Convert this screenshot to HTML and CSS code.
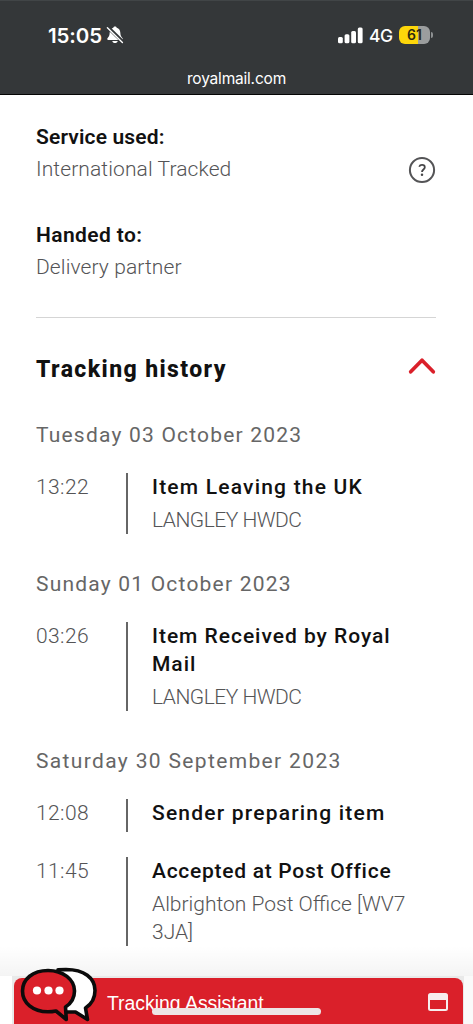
FILE: index.html
```html
<!DOCTYPE html>
<html lang="en">
<head>
<meta charset="utf-8">
<meta name="viewport" content="width=device-width, initial-scale=1">
<title>Royal Mail tracking</title>
<link rel="stylesheet" href="styles.css">
</head>
<body>
<div class="screen">
  <header class="browser-bar">
    <div class="status">
      <span class="clock">15:05</span>
      <svg class="bell" width="18" height="18" viewBox="0 0 18 18">
        <path d="M9 .5c.9 0 1.5.5 1.7 1.2 2.3.7 3.5 2.5 3.6 4.9.1 3 .9 4.200 2.200 5.600.6.7.2 1.700-.7 1.700H2.200c-.9 0-1.300-1-.7-1.700C2.900 10.800 3.600 9.600 3.700 6.600 3.800 4.200 5 2.400 7.300 1.700 7.500 1 8.100.5 9 .5z" fill="#fff"/>
        <path d="M6.300 14.900h5.400c-.3 1.300-1.300 2.100-2.700 2.100s-2.400-.8-2.700-2.100z" fill="#fff"/>
        <path d="M2.200 1.600 17 16" stroke="#343739" stroke-width="3.600"/>
        <path d="M1.400 1.800 16.400 16.400" stroke="#fff" stroke-width="1.400" stroke-linecap="round"/>
      </svg>
      <svg class="signal" width="25" height="17" viewBox="0 0 25 17" fill="#fff">
        <rect x="0" y="10" width="4.800" height="6.200" rx="1.500"/>
        <rect x="6.600" y="7.200" width="4.800" height="9" rx="1.500"/>
        <rect x="13.200" y="4" width="4.800" height="12.200" rx="1.500"/>
        <rect x="19.800" y=".6" width="4.800" height="15.600" rx="1.500"/>
      </svg>
      <span class="network">4G</span>
      <span class="battery"><span class="battery-level">61</span></span>
      <span class="battery-cap"></span>
    </div>
    <div class="address">royalmail.com</div>
  </header>

  <main class="content">
    <section class="detail">
      <div>
        <h2 class="label">Service used:</h2>
        <p class="value">International Tracked</p>
      </div>
      <svg class="help" width="28" height="28" viewBox="0 0 28 28" fill="none">
        <circle cx="14" cy="14" r="12.100" stroke="#545456" stroke-width="2"/>
        <path d="M11.200 10.700c.5-1.300 1.600-1.800 2.800-1.800 1.600 0 2.800.9 2.800 2.300 0 2.200-2.800 2.400-2.800 4.800" stroke="#454547" stroke-width="1.800"/>
        <circle cx="14" cy="18.700" r="1.250" fill="#454547"/>
      </svg>
    </section>
    <section class="detail">
      <div>
        <h2 class="label">Handed to:</h2>
        <p class="value">Delivery partner</p>
      </div>
    </section>

    <section class="history">
      <div class="history-head">
        <h1 class="heading">Tracking history</h1>
        <svg class="chevron" width="28" height="18" viewBox="0 0 28 18"><path d="M2.700 14.800 14 3.200 25.300 14.800" fill="none" stroke="#da202a" stroke-width="3.700" stroke-linecap="round" stroke-linejoin="round"/></svg>
      </div>

      <h3 class="date">Tuesday 03 October 2023</h3>
      <article class="event">
        <time class="time">13:22</time>
        <div class="event-body">
          <h4 class="event-title">Item Leaving the UK</h4>
          <p class="place">LANGLEY HWDC</p>
        </div>
      </article>

      <h3 class="date">Sunday 01 October 2023</h3>
      <article class="event">
        <time class="time">03:26</time>
        <div class="event-body">
          <h4 class="event-title snug">Item Received by Royal<br>Mail</h4>
          <p class="place">LANGLEY HWDC</p>
        </div>
      </article>

      <h3 class="date wide">Saturday 30 September 2023</h3>
      <article class="event">
        <time class="time">12:08</time>
        <div class="event-body">
          <h4 class="event-title">Sender preparing item</h4>
        </div>
      </article>
      <article class="event">
        <time class="time">11:45</time>
        <div class="event-body">
          <h4 class="event-title tight">Accepted at Post Office</h4>
          <p class="place address-line">Albrighton Post Office [WV7<br>3JA]</p>
        </div>
      </article>
    </section>
  </main>

  <aside class="assistant">
    <div class="assistant-bar">
      <span class="assistant-label">Tracking Assistant</span>
      <svg class="window" width="20" height="18" viewBox="0 0 20 18">
        <rect x="1" y="1" width="18" height="16" rx="1.500" fill="none" stroke="#f7eded" stroke-width="2"/>
        <path d="M1 1h18v6H1z" fill="#f7eded"/>
      </svg>
    </div>
    <svg class="chat" width="78" height="56" viewBox="0 0 78 56" stroke="#0b0b0b" stroke-width="3.600" stroke-linejoin="round">
      <path d="M46 3.500C64 3.500 75 12 75 24.500c0 8-4 14-9.500 17.500l2 11.500L55.500 46H38V3.800z" fill="#fff"/>
      <path d="M28 4.500C43 4.500 54.500 13.500 54.500 25c0 7-3.500 12.500-9 16l.8 12.500L36 45c-3 .6-5 .8-8 .8C13 45.800 2.500 37 2.500 25S13 4.500 28 4.500z" fill="#da202a"/>
      <g fill="#fff" stroke="none"><circle cx="17" cy="24.500" r="4.100"/><circle cx="28.500" cy="24.500" r="4.100"/><circle cx="39.500" cy="24.500" r="4.100"/></g>
    </svg>
    <span class="home-indicator"></span>
  </aside>
</div>
</body>
</html>
```
FILE: styles.css
```css
* { box-sizing: border-box; margin: 0; padding: 0; }

body { background: #fff; }

.screen {
  position: relative;
  width: 473px;
  height: 1024px;
  overflow: hidden;
  background: #fff;
  font-family: Roboto, "Liberation Sans", sans-serif;
  font-size: 21px;
  color: #545456;
}

.browser-bar {
  height: 95px;
  background: #343739;
  border-top: 1px solid #414547;
  border-bottom: 1px solid #050505;
  font-family: Inter, sans-serif;
  color: #fff;
}

.status {
  display: flex;
  align-items: center;
  height: 36px;
  margin-top: 16px;
  padding-left: 48px;
}

.clock { width: 54px; font-size: 20.500px; font-weight: 600; letter-spacing: -0.1px; white-space: nowrap; }
.bell { margin-left: 4px; }
.signal { margin-left: 214px; }
.network { width: 24px; margin-left: 6px; font-size: 17.500px; font-weight: 500; letter-spacing: -0.6px; white-space: nowrap; }

.battery {
  width: 31px;
  height: 18px;
  margin-left: 6px;
  border-radius: 6px;
  background: linear-gradient(90deg, #fdd60a 62%, #9b9d9e 62%);
  text-align: center;
}

.battery-level { display: block; font-size: 14px; line-height: 18px; font-weight: 600; color: #2d2a10; }
.battery-cap { width: 2px; height: 6px; margin-left: 1px; border-radius: 0 3px 3px 0; background: #8d9092; }

.address {
  margin-top: 16px;
  font-size: 15.500px;
  line-height: 20px;
  letter-spacing: -0.2px;
  text-align: center;
}

.content { padding: 25px 37px 0 36px; }

.detail { display: flex; justify-content: space-between; height: 97.500px; }
.label { height: 33px; font-size: 21px; line-height: 34px; font-weight: 600; color: #111; letter-spacing: 0.150px; }
.detail + .detail .label { letter-spacing: 0.400px; }
.value { font-size: 21px; line-height: 33px; font-weight: 340; letter-spacing: 0.100px; }
.help { margin-top: 36px; }

.history { margin-top: 2px; border-top: 1px solid #d5d5d5; }

.history-head {
  display: flex;
  align-items: center;
  justify-content: space-between;
  height: 50px;
  margin-top: 26px;
}

.heading { padding-top: 2px; font-size: 23px; line-height: 32px; font-weight: 800; color: #111; letter-spacing: 1.400px; }
.chevron { margin-top: -6px; }

.date { height: 28px; margin: 26px 0 25px; font-size: 21px; line-height: 30px; font-weight: 450; color: #666; letter-spacing: 1.200px; white-space: nowrap; }
.date.wide { letter-spacing: 1.350px; }

.event { display: flex; }
.event + .event { margin-top: 24.500px; }
.event + .date { margin-top: 35px; }

.time { width: 90px; font-weight: 340; line-height: 28px; letter-spacing: 0.400px; }

.event-body { flex: 1; padding-left: 24px; border-left: 2px solid #666; }

.event-title {
  padding-bottom: 5px;
  font-size: 21px;
  line-height: 28px;
  font-weight: 500;
  letter-spacing: 1.200px;
  color: #111;
  white-space: nowrap;
}

.event-title.snug { letter-spacing: 0.970px; }
.event-title.tight { letter-spacing: 0.720px; }

.place { font-size: 21px; line-height: 28px; font-weight: 340; letter-spacing: -0.500px; white-space: nowrap; }
.place.address-line { letter-spacing: 0; }

.assistant {
  position: absolute;
  inset: auto 0 0 0;
  height: 48px;
  padding: 2px 10px 0 14px;
  background: linear-gradient(90deg, #fff 12px, #e9e9e9 12px, #e9e9e9 464px, #fafafa 464px);
}

.assistant::before {
  content: "";
  position: absolute;
  inset: -30px 0 auto 0;
  height: 30px;
  background: linear-gradient(rgba(0, 0, 0, 0), rgba(0, 0, 0, 0.045));
}

.assistant-bar {
  display: flex;
  align-items: center;
  justify-content: space-between;
  height: 46px;
  padding: 4px 15px 0 93px;
  border-radius: 8px 8px 0 0;
  background: #da202a;
}

.assistant-label { font: 19.400px "Liberation Sans", Arial, sans-serif; color: #fff; }
.window { margin-top: -3px; }
.chat { position: absolute; left: 20px; top: -10px; }

.home-indicator {
  position: absolute;
  left: 152px;
  top: 32px;
  width: 169px;
  height: 7px;
  border-radius: 4px;
  background: #ede6e6;
}
```
